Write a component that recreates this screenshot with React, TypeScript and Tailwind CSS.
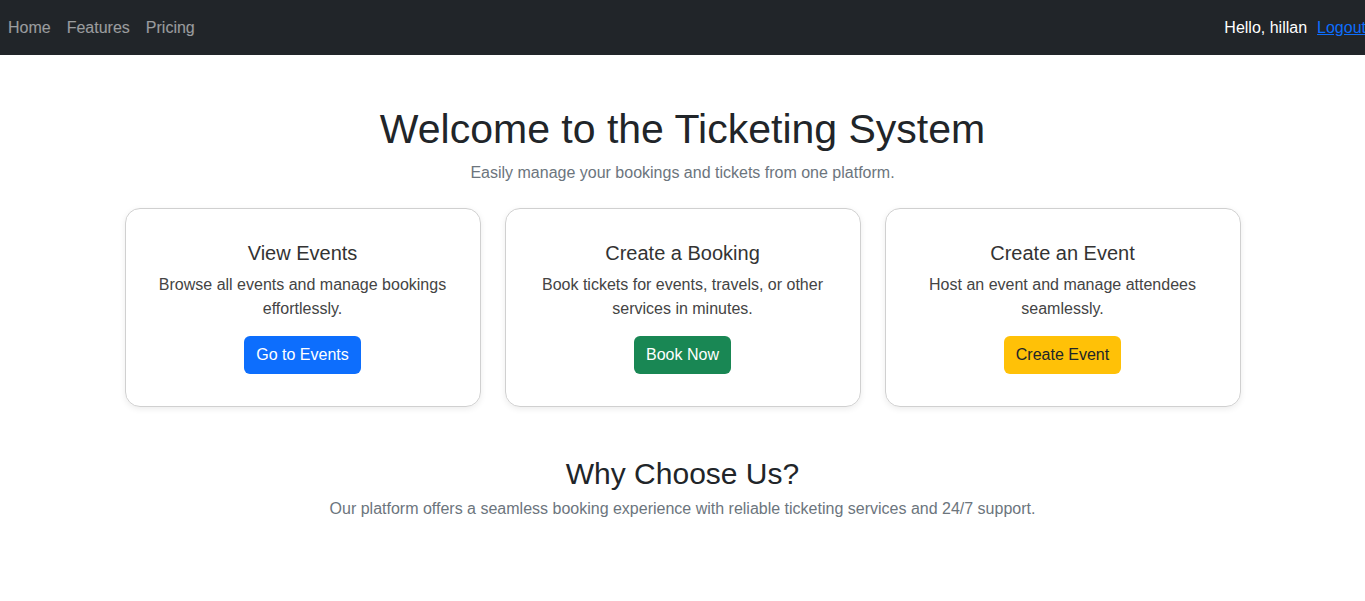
export default function App() {
  const cards = [
    {
      title: "View Events",
      text: "Browse all events and manage bookings effortlessly.",
      button: "Go to Events",
      btn: "bg-[#0d6efd] text-white",
    },
    {
      title: "Create a Booking",
      text: "Book tickets for events, travels, or other services in minutes.",
      button: "Book Now",
      btn: "bg-[#198754] text-white",
    },
    {
      title: "Create an Event",
      text: "Host an event and manage attendees seamlessly.",
      button: "Create Event",
      btn: "bg-[#ffc107] text-[#212529]",
    },
  ];

  return (
    <div className="min-h-[601px] bg-white overflow-hidden font-['Segoe_UI','Liberation_Sans',sans-serif] text-[#212529]">
      {/* Navbar */}
      <nav className="h-[55px] bg-[#212529] flex items-center justify-between">
        <div className="flex items-center text-base text-white/55">
          <a className="px-2 py-2">Home</a>
          <a className="px-2 py-2">Features</a>
          <a className="px-2 py-2">Pricing</a>
        </div>
        <div className="flex items-center gap-[10px] text-base whitespace-nowrap -mr-px">
          <span className="text-white">Hello, hillan</span>
          <a className="text-[#0d6efd] underline">Logout</a>
        </div>
      </nav>

      <main className="max-w-[1140px] mx-auto px-3 text-center">
        <h1 className="mt-[50px] mb-2 text-[41px] leading-[48px] font-medium">
          Welcome to the Ticketing System
        </h1>
        <p className="text-base leading-6 text-[#6c757d] mb-[23px]">
          Easily manage your bookings and tickets from one platform.
        </p>

        <div className="grid grid-cols-3 gap-6">
          {cards.map((c) => (
            <div
              key={c.title}
              className="h-[199px] border border-[#d0d0d0] rounded-[15px] shadow-[0_2px_6px_rgba(0,0,0,0.08)] px-6 pt-8 flex flex-col items-center"
            >
              <h4 className="text-xl leading-6 font-medium text-[#333] mb-2">{c.title}</h4>
              <p className="text-base leading-6 text-[#444] mb-[15px]">{c.text}</p>
              <button className={`h-[38px] px-3 rounded-md text-base ${c.btn}`}>{c.button}</button>
            </div>
          ))}
        </div>

        <h2 className="mt-[48px] mb-[4px] text-[30px] leading-[38px] font-medium">Why Choose Us?</h2>
        <p className="text-base leading-6 text-[#6c757d]">
          Our platform offers a seamless booking experience with reliable ticketing services and 24/7 support.
        </p>
      </main>
    </div>
  );
}
